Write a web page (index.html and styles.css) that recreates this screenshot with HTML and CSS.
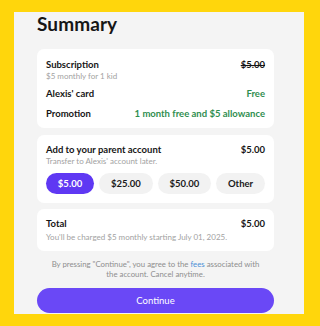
FILE: index.html
```html
<!DOCTYPE html>
<html lang="en">
<head>
<meta charset="utf-8">
<title>Summary</title>
<link rel="stylesheet" href="styles.css">
</head>
<body>
<div class="panel">
  <h1 class="title">Summary</h1>

  <section class="card card-summary">
    <div class="row-block">
      <div class="row">
        <span class="label">Subscription</span>
        <span class="value strike">$5.00</span>
      </div>
      <div class="sub">$5 monthly for 1 kid</div>
    </div>
    <div class="row">
      <span class="label">Alexis' card</span>
      <span class="value green">Free</span>
    </div>
    <div class="row">
      <span class="label">Promotion</span>
      <span class="value green">1 month free and $5 allowance</span>
    </div>
  </section>

  <section class="card card-add">
    <div class="row">
      <span class="label">Add to your parent account</span>
      <span class="value">$5.00</span>
    </div>
    <div class="sub">Transfer to Alexis' account later.</div>
    <div class="pills">
      <button class="pill active">$5.00</button>
      <button class="pill">$25.00</button>
      <button class="pill">$50.00</button>
      <button class="pill">Other</button>
    </div>
  </section>

  <section class="card card-total">
    <div class="row">
      <span class="label">Total</span>
      <span class="value">$5.00</span>
    </div>
    <div class="sub">You'll be charged $5 monthly starting July 01, 2025.</div>
  </section>

  <p class="legal">By pressing "Continue", you agree to the <a class="link" href="#">fees</a> associated with<br>the account. Cancel anytime.</p>

  <button class="continue">Continue</button>
</div>
</body>
</html>
```
FILE: styles.css
```css
* { box-sizing: border-box; }
html, body { margin: 0; padding: 0; }
body {
  background: #FFD60C;
  font-family: "Lato", "Noto Sans", sans-serif;
  color: #161616;
  width: 320px;
  height: 326px;
  overflow: hidden;
}
.panel {
  margin: 12px 0 0 14px;
  width: 290px;
  height: 302px;
  background: #F4F4F4;
  padding: 0 30px 0 23px;
  display: flex;
  flex-direction: column;
  overflow: hidden;
}
.title {
  margin: 0;
  font-size: 19px;
  line-height: 24px;
  font-weight: 700;
  letter-spacing: 0.1px;
}
.card {
  background: #FFFFFF;
  border-radius: 7px;
  padding: 8px 9px 8px 9px;
}
.card-summary {
  margin-top: 13px;
  padding-top: 8.5px;
  display: flex;
  flex-direction: column;
  gap: 6.5px;
}
.card-add {
  margin-top: 7px;
  padding-bottom: 9px;
}
.card-total {
  margin-top: 6px;
  padding-bottom: 9px;
}
.row {
  display: flex;
  justify-content: space-between;
  align-items: baseline;
  font-size: 9.5px;
  line-height: 13px;
  font-weight: 700;
}
.card-total .row { line-height: 14px; }
.sub {
  font-size: 8px;
  line-height: 10px;
  color: #A2A2A2;
}
.card-total .sub { margin-top: 1px; }
.strike { text-decoration: line-through; text-decoration-thickness: 1px; }
.green { color: #2F8E4F; }
.pills {
  margin-top: 7.5px;
  display: flex;
  gap: 5px;
}
.pill {
  flex: 1 1 auto;
  height: 21px;
  border: none;
  border-radius: 10.5px;
  background: #F2F2F2;
  color: #1a1a1a;
  font-family: inherit;
  font-size: 9.5px;
  font-weight: 700;
  padding: 0 11px;
  cursor: pointer;
}
.pill.active {
  background: #5F38F3;
  color: #FFFFFF;
}
.legal {
  margin: 8px 0 0;
  text-align: center;
  font-size: 7.8px;
  line-height: 10px;
  color: #8E8E8E;
}
.link { color: #4A8FD6; text-decoration: none; }
.continue {
  margin-top: 9px;
  height: 25px;
  width: 100%;
  border: none;
  border-radius: 12.5px;
  background: #6A48F6;
  color: #FFFFFF;
  font-family: inherit;
  font-size: 9.5px;
  font-weight: 400;
  flex-shrink: 0;
}
```
